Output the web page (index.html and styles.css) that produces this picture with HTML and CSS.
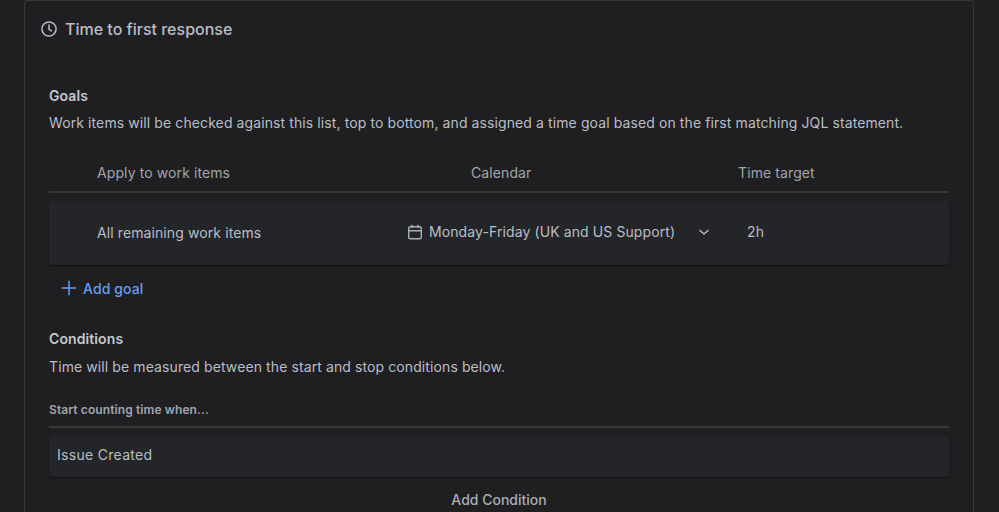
FILE: index.html
```html
<!DOCTYPE html>
<html lang="en">
<head>
<meta charset="utf-8">
<title>Time to first response</title>
<link rel="stylesheet" href="styles.css">
</head>
<body>
<main class="card">
  <h1 class="title">
    <svg class="clock" viewBox="0 0 16 16" width="16" height="16" fill="none" stroke="currentColor" stroke-width="1.5"><circle cx="8" cy="8" r="7.1"/><path d="M8 4v4.3l2.4 1.6" stroke-linecap="round"/></svg>
    <span>Time to first response</span>
  </h1>
  <section class="goals">
    <h2 class="section-title">Goals</h2>
    <p class="desc">Work items will be checked against this list, top to bottom, and assigned a time goal based on the first matching JQL statement.</p>
    <div class="thead">
      <span class="th-apply">Apply to work items</span>
      <span class="th-cal">Calendar</span>
      <span class="th-time">Time target</span>
    </div>
    <div class="goal-row">
      <span class="td-apply">All remaining work items</span>
      <span class="td-cal">
        <svg class="cal-icon" viewBox="0 0 16 16" width="16" height="16" fill="none" stroke="currentColor" stroke-width="1.4"><rect x="1.7" y="2.7" width="12.6" height="12.1" rx="1.5"/><path d="M1.7 6.7h12.6M5 .8v3.2M11 .8v3.2"/></svg>
        <span class="cal-name">Monday-Friday (UK and US Support)</span>
        <svg class="chev" viewBox="0 0 12 12" width="12" height="12" fill="none" stroke="currentColor" stroke-width="1.4" stroke-linecap="round" stroke-linejoin="round"><path d="M2 4.5 6 8l4-3.5"/></svg>
      </span>
      <span class="td-time">2h</span>
    </div>
    <button class="add-goal" type="button">
      <svg viewBox="0 0 16 16" width="16" height="16" fill="none" stroke="currentColor" stroke-width="1.5"><path d="M8 .8v14.4M.8 8h14.4"/></svg>
      <span>Add goal</span>
    </button>
  </section>
  <section class="conditions">
    <h2 class="section-title">Conditions</h2>
    <p class="desc">Time will be measured between the start and stop conditions below.</p>
    <h3 class="sub-title">Start counting time when...</h3>
    <div class="cond-box">Issue Created</div>
    <div class="add-cond">Add Condition</div>
  </section>
</main>
</body>
</html>
```
FILE: styles.css
```css
* { box-sizing: border-box; }
html, body { margin: 0; height: 512px; overflow: hidden; }
body {
  background: #1f1f21;
  color: #b8bec7;
  font-family: Inter, "Noto Sans", sans-serif;
  font-size: 14px;
  letter-spacing: .1px;
  padding: 0 25px 0 24px;
}
.card {
  height: 512px;
  border: 1px solid #37383b;
  border-bottom: 0;
  border-radius: 4px 4px 0 0;
  background: #1f1f21;
  padding: 0 24px;
}
.title {
  display: flex;
  align-items: center;
  gap: 8px;
  margin: 0 0 0 -8px;
  height: 56px;
  font-size: 16px;
  font-weight: 500;
  letter-spacing: 0;
  color: #b8bec7;
}
.section-title {
  margin: 0;
  font-size: 14px;
  line-height: 20px;
  font-weight: 600;
  color: #c3c8cf;
}
.desc { margin: 8px 0 0; line-height: 20px; }
.goals { padding-top: 29px; }
.goals .desc { margin-top: 7px; }
.thead {
  display: grid;
  grid-template-columns: 422px 267px 1fr;
  height: 30px;
  margin-top: 30px;
  line-height: 20px;
  border-bottom: 2px solid #37383b;
  color: #a0a5ad;
}
.th-apply { padding-left: 48px; }
.goal-row {
  display: grid;
  grid-template-columns: 358px 339px 1fr;
  align-items: center;
  height: 64px;
  margin-top: 8px;
  padding-bottom: 3px;
  background: #242528;
  border-radius: 3px;
  box-shadow: 0 1px 1px #111214;
}
.td-apply { padding-left: 48px; padding-top: 1px; }
.td-cal { display: flex; align-items: center; }
.cal-icon { flex: none; color: #a9aeb6; }
.cal-name { margin-left: 6px; white-space: nowrap; }
.chev { margin-left: 23px; flex: none; }
.td-time { padding-left: 1px; }
.add-goal {
  display: flex;
  align-items: center;
  gap: 6px;
  margin: 13px 0 0 12px;
  padding: 0;
  height: 20px;
  border: 0;
  background: none;
  color: #669df1;
  font: 500 14px Inter, "Noto Sans", sans-serif;
  letter-spacing: .1px;
}
.conditions { padding-top: 31px; }
.sub-title {
  margin: 0;
  padding: 25px 0 8px;
  font-size: 12px;
  line-height: 16px;
  font-weight: 600;
  color: #a0a5ad;
  border-bottom: 2px solid #37383b;
}
.cond-box {
  margin-top: 8px;
  height: 41px;
  padding-left: 8px;
  line-height: 38px;
  letter-spacing: .3px;
  background: #242528;
  border-radius: 4px;
  box-shadow: 0 1px 1px #111214;
}
.add-cond { margin-top: 13px; text-align: center; line-height: 20px; font-weight: 500; letter-spacing: 0; color: #a9aeb6; }
```
